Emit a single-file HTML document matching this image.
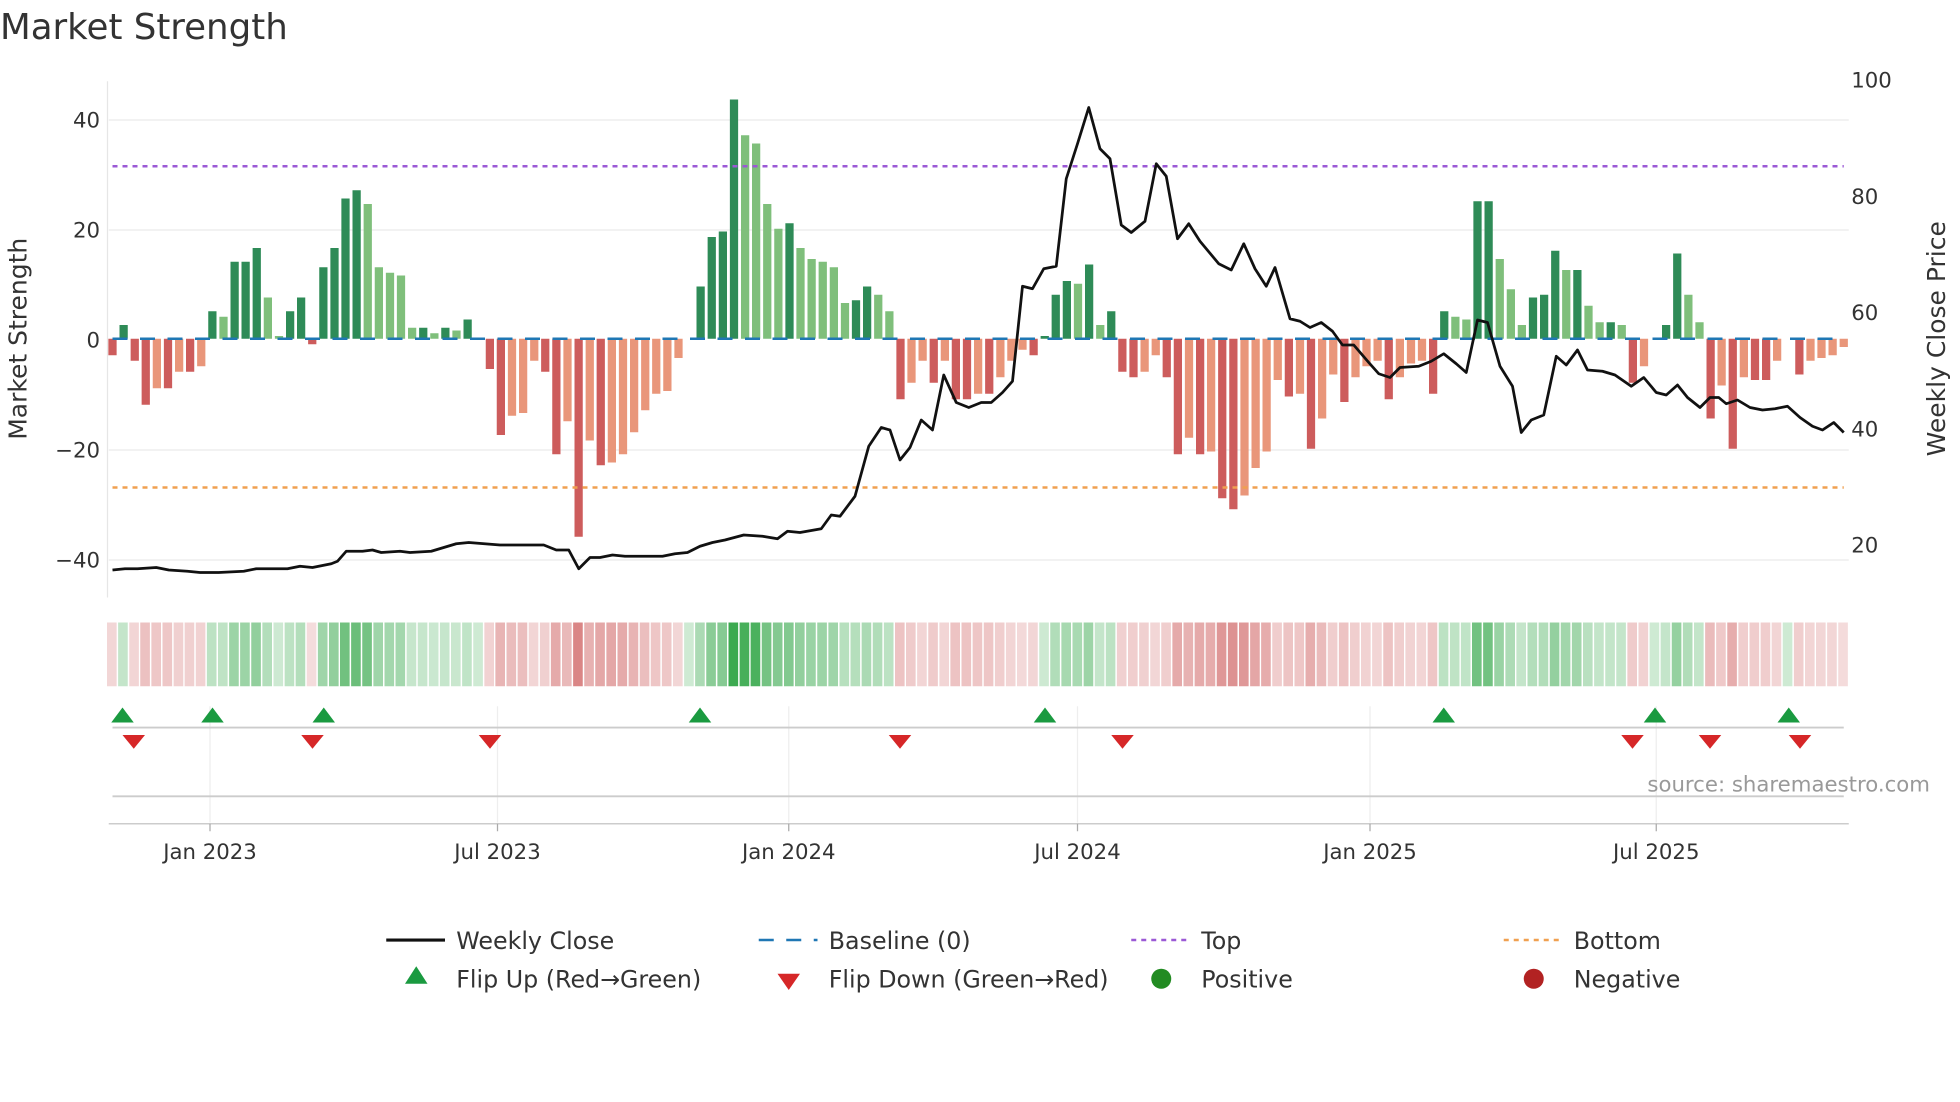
<!DOCTYPE html>
<html><head><meta charset="utf-8"><style>
html,body{margin:0;padding:0;background:#fff;width:1960px;height:1102px;overflow:hidden}
svg{display:block}
text{font-family:"DejaVu Sans","Liberation Sans",sans-serif;fill:#333}
</style></head><body>
<svg id="s" width="1960" height="1102" viewBox="0 0 1568 881.6" xmlns="http://www.w3.org/2000/svg">
<rect width="1568" height="882" fill="#fff"/>
<text x="0" y="31" font-size="28.5" fill="#333">Market Strength</text>
<g stroke="#eeeeee" stroke-width="1.2">
<line x1="87" y1="96" x2="1479" y2="96"/><line x1="87" y1="184" x2="1479" y2="184"/>
<line x1="87" y1="360" x2="1479" y2="360"/><line x1="87" y1="448" x2="1479" y2="448"/>
</g>
<line x1="86" y1="65" x2="86" y2="478" stroke="#e6e6e6"/>
<g font-size="17" text-anchor="end">
<text x="80" y="102">40</text><text x="80" y="190">20</text><text x="80" y="278">0</text>
<text x="80" y="366">−20</text><text x="80" y="454">−40</text>
</g>
<g font-size="17">
<text x="1481" y="70">100</text><text x="1481" y="163">80</text><text x="1481" y="256">60</text>
<text x="1481" y="349">40</text><text x="1481" y="442">20</text>
</g>
<text transform="translate(21,271) rotate(-90)" font-size="20" text-anchor="middle">Market Strength</text>
<text transform="translate(1556,271) rotate(-90)" font-size="20" text-anchor="middle">Weekly Close Price</text>
<g id="bars"></g>
<line x1="90" y1="271" x2="1475" y2="271" stroke="#1f77b4" stroke-width="2" stroke-dasharray="12,10"/>
<line x1="90" y1="133" x2="1475" y2="133" stroke="#9b59d6" stroke-width="2" stroke-dasharray="4,4"/>
<line x1="90" y1="390" x2="1475" y2="390" stroke="#f0a050" stroke-width="2" stroke-dasharray="4,4"/>
<polyline id="price" fill="none" stroke="#111" stroke-width="2.2" stroke-linejoin="round"/>
<g id="strip"></g>
<g stroke="#eeeeee" stroke-width="1">
<line x1="168" y1="565" x2="168" y2="658"/><line x1="398" y1="565" x2="398" y2="658"/>
<line x1="631" y1="565" x2="631" y2="658"/><line x1="862" y1="565" x2="862" y2="658"/>
<line x1="1096" y1="565" x2="1096" y2="658"/><line x1="1325" y1="565" x2="1325" y2="658"/>
</g>
<line x1="90" y1="582" x2="1475" y2="582" stroke="#cccccc" stroke-width="1.5"/>
<line x1="90" y1="637" x2="1475" y2="637" stroke="#cccccc" stroke-width="1.5"/>
<line x1="87" y1="659" x2="1479" y2="659" stroke="#cccccc" stroke-width="1.2"/>
<g id="tri"></g>
<text x="1544" y="633" font-size="17" text-anchor="end" style="fill:#999">source: sharemaestro.com</text>
<g stroke="#aaa"><line x1="168" y1="659" x2="168" y2="665"/><line x1="398" y1="659" x2="398" y2="665"/><line x1="631" y1="659" x2="631" y2="665"/><line x1="862" y1="659" x2="862" y2="665"/><line x1="1096" y1="659" x2="1096" y2="665"/><line x1="1325" y1="659" x2="1325" y2="665"/></g>
<g font-size="17" text-anchor="middle">
<text x="168" y="687">Jan 2023</text><text x="398" y="687">Jul 2023</text><text x="631" y="687">Jan 2024</text>
<text x="862" y="687">Jul 2024</text><text x="1096" y="687">Jan 2025</text><text x="1325" y="687">Jul 2025</text>
</g>
<g font-size="19">
<line x1="309" y1="752" x2="356" y2="752" stroke="#111" stroke-width="2.5"/><text x="365" y="759">Weekly Close</text>
<line x1="607" y1="752" x2="654" y2="752" stroke="#1f77b4" stroke-width="2" stroke-dasharray="12,10"/><text x="663" y="759">Baseline (0)</text>
<line x1="905" y1="752" x2="952" y2="752" stroke="#9b59d6" stroke-width="2" stroke-dasharray="4,4"/><text x="961" y="759">Top</text>
<line x1="1203" y1="752" x2="1250" y2="752" stroke="#f0a050" stroke-width="2" stroke-dasharray="4,4"/><text x="1259" y="759">Bottom</text>
<polygon points="333,773 324,787 342,787" fill="#1a9a40"/><text x="365" y="790">Flip Up (Red→Green)</text>
<polygon points="622,779 640,779 631,792" fill="#d62728"/><text x="663" y="790">Flip Down (Green→Red)</text>
<circle cx="929" cy="783" r="8" fill="#228b22"/><text x="961" y="790">Positive</text>
<circle cx="1227" cy="783" r="8" fill="#b22222"/><text x="1259" y="790">Negative</text>
</g>
</svg>
<script>
var v=[-3,2.5,-4,-12,-9,-9,-6,-6,-5,5,4,14,14,16.5,7.5,0.5,5,7.5,-1,13,16.5,25.5,27,24.5,13,12,11.5,2,2,1,2,1.5,3.5,0,-5.5,-17.5,-14,-13.5,-4,-6,-21,-15,-36,-18.5,-23,-22.5,-21,-17,-13,-10,-9.5,-3.5,0,9.5,18.5,19.5,43.5,37,35.5,24.5,20,21,16.5,14.5,14,13,6.5,7,9.5,8,5,-11,-8,-4,-8,-4,-11,-11,-10,-10,-7,-4,-2,-3,0.5,8,10.5,10,13.5,2.5,5,-6,-7,-6,-3,-7,-21,-18,-21,-20.5,-29,-31,-28.5,-23.5,-20.5,-7.5,-10.5,-10,-20,-14.5,-6.5,-11.5,-7,-5,-4,-11,-7,-4.5,-4,-10,5,4,3.5,25,25,14.5,9,2.5,7.5,8,16,12.5,12.5,6,3,3,2.5,-8,-5,0,2.5,15.5,8,3,-14.5,-8.5,-20,-7,-7.5,-7.5,-4,0,-6.5,-4,-3.5,-3,-1.5];
var n=v.length,x0=90,x1=1475,dx=(x1-x0)/(n-1),b='',s='';
for(var i=0;i<n;i++){var x=x0+i*dx,a=v[i],p=i?v[i-1]:0,inc=Math.abs(a)>=Math.abs(p)||(a*p<0);
var h=Math.abs(a)*4.4,y=a>=0?271-h:271;
var c=a>=0?(inc?'#2e8b57':'#7fbf7b'):(inc?'#cd5c5c':'#e9967a');
if(h>0.3)b+='<rect x="'+(x-3.3).toFixed(1)+'" y="'+y.toFixed(1)+'" width="6.6" height="'+h.toFixed(1)+'" fill="'+c+'"/>';
var al=0.25+Math.min(Math.abs(a),40)/40*0.75;
var sc=a>=0?'rgba(60,170,80,'+al.toFixed(2)+')':'rgba(205,92,92,'+(al*0.8).toFixed(2)+')';
s+='<rect x="'+(x-4.4).toFixed(1)+'" y="498" width="'+(dx-1.2).toFixed(1)+'" height="51" fill="'+sc+'"/>';}
document.getElementById('bars').innerHTML=b;document.getElementById('strip').innerHTML=s;
var pr="90,456 100,455 110,455 125,454 135,456 150,457 160,458 175,458 195,457 205,455 230,455 240,453 250,454 265,451 270,449 277,441 290,441 298,440 305,442 320,441 328,442 345,441 355,438 365,435 375,434 400,436 435,436 445,440 455,440 463,455 472,446 480,446 490,444 500,445 530,445 540,443 550,442 560,437 570,434 580,432 595,428 610,429 622,431 630,425 640,426 657,423 665,412 672,413 684,397 695,357 705,342 712,344 720,368 728,358 737,336 746,344 755,300 765,322 775,326 785,322 793,322 802,314 810,305 818,229 826,231 835,215 845,213 853,143 862,115 871,86 880,119 888,127 897,180 905,186 916,177 925,131 933,141 942,191 951,179 960,193 975,211 985,216 995,195 1004,215 1013,229 1020,214 1032,255 1040,257 1048,262 1057,258 1066,265 1074,276 1083,276 1095,290 1103,299 1112,302 1120,294 1135,293 1145,289 1155,283 1165,291 1173,298 1182,256 1190,258 1200,293 1210,309 1217,346 1225,336 1235,332 1245,285 1253,292 1262,280 1270,296 1282,297 1292,300 1305,309 1315,302 1325,314 1333,316 1342,308 1350,318 1360,326 1368,318 1375,318 1381,323 1390,320 1400,326 1410,328 1420,327 1430,325 1440,334 1450,341 1458,344 1467,338 1475,346";
document.getElementById('price').setAttribute('points',pr);
var up=[98,170,259,560,836,1155,1324,1431],dn=[107,250,392,720,898,1306,1368,1440],t='';
up.forEach(function(x){t+='<polygon points="'+x+',566 '+(x-9)+',578 '+(x+9)+',578" fill="#1a9a40"/>';});
dn.forEach(function(x){t+='<polygon points="'+(x-9)+',588 '+(x+9)+',588 '+x+',599" fill="#d62728"/>';});
document.getElementById('tri').innerHTML=t;
</script>
</body></html>
